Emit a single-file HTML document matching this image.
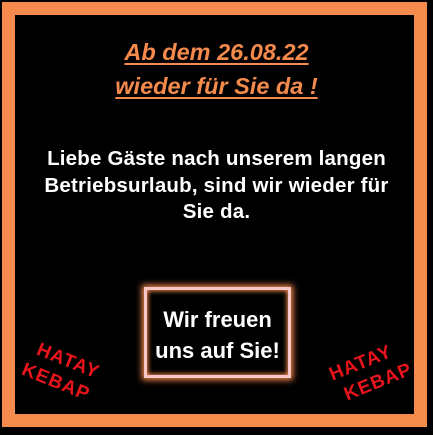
<!DOCTYPE html>
<html><head><style>
body{margin:0;width:433px;height:435px;background:#000;position:relative;overflow:hidden;font-family:"Liberation Sans",sans-serif}
.frame{position:absolute;left:2px;top:2px;width:399px;height:399px;border:13px solid #f58a4d;background:#000}
.t{position:absolute;left:0;width:433px;text-align:center;color:#f58a4d;font-weight:bold;font-style:italic;font-size:23.5px;text-decoration:underline;text-decoration-thickness:2px;text-underline-offset:3px}
.b{position:absolute;left:0;width:433px;text-align:center;color:#fff;font-weight:bold;font-size:20.5px;line-height:26.5px;top:146px;letter-spacing:0.2px}
.box{position:absolute;left:144px;top:287px;width:141px;border:3px solid #f8c8c8;box-shadow:0 0 6px 2px #f58a4d,inset 0 0 5px 1px #f58a4d;color:#fff;font-weight:bold;font-size:22px;line-height:31px;text-align:center;padding-top:14px;height:71px}
.k{position:absolute;color:#e8141c;font-weight:bold;font-size:19px;line-height:24px;letter-spacing:1px}
</style></head><body>
<div class="frame"></div>
<div class="t" style="top:39px">Ab dem 26.08.22</div>
<div class="t" style="top:73px">wieder für Sie da !</div>
<div class="b">Liebe Gäste nach unserem langen<br>Betriebsurlaub, sind wir wieder für<br>Sie da.</div>
<div class="box">Wir freuen<br>uns auf Sie!</div>
<div class="k" style="left:36px;top:336px;transform:rotate(22deg);transform-origin:0 0">&nbsp;HATAY<br>KEBAP</div>
<div class="k" style="left:326px;top:365px;transform:rotate(-22deg);transform-origin:0 0">HATAY<br>&nbsp;KEBAP</div>
</body></html>
